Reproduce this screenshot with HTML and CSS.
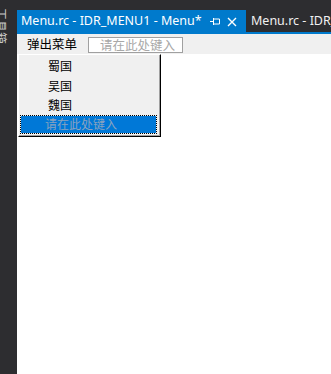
FILE: index.html
```html
<!DOCTYPE html>
<html>
<head>
<meta charset="utf-8">
<link rel="stylesheet" href="styles.css">
</head>
<body>
<div class="toolstrip"><span class="tooltab">工具箱</span></div>
<div class="main">
  <div class="tabs">
    <div class="tab active">
      <span class="tabtitle">Menu.rc - IDR_MENU1 - Menu*</span>
      <svg class="pin" width="10" height="8" viewBox="0 0 10 8"><path d="M0 4.5H3.5M3.5 1V8M3.5 2H9.5V7H3.5" fill="none" stroke="#fff" stroke-width="1"/></svg>
      <svg class="close" width="10" height="10" viewBox="0 0 10 10"><path d="M1 1L9 9M9 1L1 9" stroke="#fff" stroke-width="1.4"/></svg>
    </div>
    <div class="tab inactive"><span class="tabtitle">Menu.rc - IDR_MENU1</span></div>
  </div>
  <div class="menubar">
    <span class="menutitle">弹出菜单</span>
    <span class="typebox">请在此处键入</span>
  </div>
  <div class="canvas">
    <div class="popup">
      <div class="item">蜀国</div>
      <div class="item">吴国</div>
      <div class="item">魏国</div>
      <div class="item sel">请在此处键入</div>
    </div>
  </div>
</div>
</body>
</html>
```
FILE: styles.css
```css
html, body {
  margin: 0;
  padding: 0;
}
body {
  width: 331px;
  height: 374px;
  overflow: hidden;
  background: #2d2d30;
  display: flex;
  font-family: "Noto Sans CJK SC", sans-serif;
}
.toolstrip {
  width: 17px;
  flex: none;
  overflow: hidden;
  position: relative;
}
.tooltab {
  display: block;
  writing-mode: vertical-rl;
  text-orientation: sideways;
  font-size: 12px;
  line-height: 12px;
  color: #c8c8c8;
  margin-left: -5px;
  margin-top: 8px;
}
.main {
  flex: 1;
  display: flex;
  flex-direction: column;
  min-width: 0;
}
.tabs {
  height: 22px;
  padding-top: 10px;
  border-bottom: 2px solid #007acc;
  display: flex;
  white-space: nowrap;
  overflow: hidden;
}
.tab {
  height: 22px;
  display: flex;
  align-items: center;
  flex: none;
  font-family: "Noto Sans", "Liberation Sans", sans-serif;
  font-size: 12.5px;
  color: #fff;
}
.tab.active {
  background: #007acc;
  width: 229px;
  padding-left: 4px;
  box-sizing: border-box;
}
.tab.inactive {
  padding-left: 5px;
  color: #f1f1f1;
}
.tabtitle {
  line-height: 22px;
}
.pin {
  margin-left: 8px;
}
.close {
  margin-left: 7px;
  margin-top: 1px;
}
.menubar {
  height: 20px;
  background: #f0f0f0;
  display: flex;
  align-items: center;
  padding-left: 10px;
  gap: 11px;
}
.menutitle {
  font-size: 12.5px;
  color: #000;
  line-height: 16px;
}
.typebox {
  width: 95px;
  height: 16px;
  box-sizing: border-box;
  border: 1px solid #a0a0a0;
  background: #fff;
  color: #a8a8a8;
  font-size: 12.5px;
  line-height: 14px;
  padding-left: 11px;
  margin-top: 2px;
}
.canvas {
  flex: 1;
  background: #fff;
  padding-left: 1px;
}
.popup {
  width: 143px;
  height: 83px;
  box-sizing: border-box;
  background: #f0f0f0;
  border-top: 1px solid #fff;
  border-left: 1px solid #fff;
  border-right: 1px solid #000;
  border-bottom: 1px solid #000;
  box-shadow: inset -1px -1px 0 #a0a0a0;
  padding: 1px 3px 0 1px;
}
.item {
  height: 19.5px;
  line-height: 19px;
  font-size: 12px;
  color: #000;
  padding-left: 28px;
}
.item.sel {
  height: 19px;
  box-sizing: border-box;
  border: 1px dotted #000;
  background: #0078d7;
  background-clip: padding-box;
  color: #8aa3bf;
  padding-left: 24px;
  line-height: 16px;
}
```
